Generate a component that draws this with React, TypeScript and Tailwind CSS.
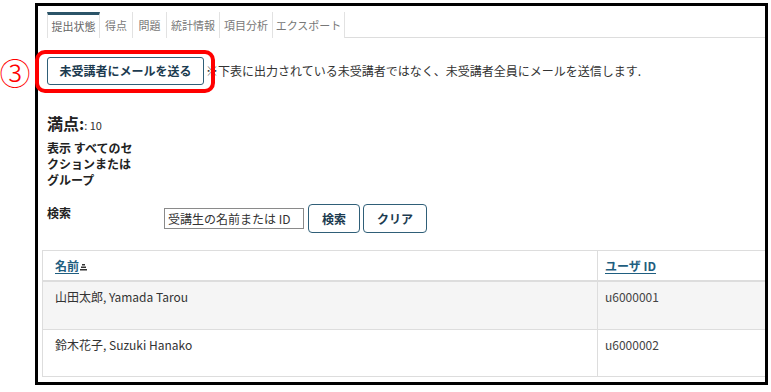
import React from 'react';

const tabs = [
  { label: '提出状態', w: 'w-[53px]', active: true },
  { label: '得点', w: 'w-[33px]', active: false },
  { label: '問題', w: 'w-[34px]', active: false },
  { label: '統計情報', w: 'w-[53px]', active: false },
  { label: '項目分析', w: 'w-[53px]', active: false },
  { label: 'エクスポート', w: 'w-[72px]', active: false },
];

const rows = [
  { name: '山田太郎, Yamada Tarou', id: 'u6000001', bg: 'bg-[#f5f5f5]' },
  { name: '鈴木花子, Suzuki Hanako', id: 'u6000002', bg: 'bg-white' },
];

export default function App() {
  return (
    <div className="relative w-[771px] h-[392px] bg-white overflow-hidden font-['Noto_Sans_CJK_JP','Noto_Sans',sans-serif] text-[#333]">
      <div className="ml-[35px] mt-[3px] w-[733px] h-[382px] border-[3px] border-black overflow-hidden">
        {/* tabs */}
        <div className="ml-[9px] mt-[6px] flex border-b border-[#ddd] h-[26px]">
          {tabs.map((t) => (
            <div
              key={t.label}
              className={
                t.active
                  ? `${t.w} h-[26px] flex items-center justify-center border-t-[3px] border-t-[#2b5468] border-x border-x-[#e2e2e2] text-[11px] leading-none text-[#666] bg-white`
                  : `${t.w} h-[26px] flex items-center justify-center border-r border-[#e2e2e2] text-[11px] leading-none text-[#777] bg-white`
              }
            >
              {t.label}
            </div>
          ))}
        </div>

        {/* send mail */}
        <div className="ml-[9px] mt-[19px] flex items-center gap-[2px]">
          <button className="w-[157px] h-[28px] rounded-[3px] border border-[#2f5f78] text-[12px] leading-none font-semibold text-[#1c3b50] bg-white">
            未受講者にメールを送る
          </button>
          <span className="text-[12px] leading-none text-[#333]">
            ※下表に出力されている未受講者ではなく、未受講者全員にメールを送信します.
          </span>
        </div>

        {/* max score */}
        <div className="ml-[9px] mt-[28px] h-[20px] flex items-baseline">
          <span className="text-[16px] leading-[20px] font-bold text-[#222]">満点:</span>
          <span className="text-[11px] leading-[20px] text-[#333]">: 10</span>
        </div>

        {/* display filter */}
        <div className="ml-[9px] mt-[7px] w-[90px] text-[12px] leading-[16px] font-semibold text-[#222]">
          表示 すべてのセクションまたはグループ
        </div>

        {/* search */}
        <div className="ml-[9px] mt-[16px] flex items-start">
          <div className="w-[117px] pt-[1px] text-[12px] leading-[16px] font-semibold text-[#222]">検索</div>
          <div className="flex items-center gap-[3px]">
            <div className="w-[140px] h-[21px] border border-[#8a8a8a] px-[3px] flex items-center text-[12px] leading-none text-[#333]">
              受講生の名前または ID
            </div>
            <button className="ml-[1px] w-[52px] h-[29px] rounded-[4px] border border-[#2f5f78] text-[12px] leading-none font-semibold text-[#1c3b50] bg-white">
              検索
            </button>
            <button className="w-[64px] h-[29px] rounded-[4px] border border-[#2f5f78] text-[12px] leading-none font-semibold text-[#1c3b50] bg-white">
              クリア
            </button>
          </div>
        </div>

        {/* table */}
        <div className="ml-[4px] mt-[17px] w-[760px] border-t border-l border-[#ddd]">
          <div className="flex h-[31px] border-b-2 border-[#ddd]">
            <div className="w-[555px] border-r border-[#ddd] pl-[12px] flex items-center">
              <span className="text-[12px] leading-none font-semibold text-[#1f5e80] underline underline-offset-2">名前</span>
              <svg width="7" height="7" viewBox="0 0 7 7" className="ml-[1px] mt-[3px]">
                <rect x="2" y="0" width="3" height="1.5" fill="#333" />
                <rect x="1" y="2.5" width="5" height="1.5" fill="#333" />
                <rect x="0" y="5" width="7" height="1.5" fill="#333" />
              </svg>
            </div>
            <div className="flex-1 pl-[7px] flex items-center">
              <span className="text-[12px] leading-none font-semibold text-[#1f5e80] underline underline-offset-2">ユーザ ID</span>
            </div>
          </div>
          {rows.map((r, i) => (
            <div key={r.id} className={`flex h-[47px] ${r.bg} ${i > 0 ? 'border-t border-[#ddd]' : ''}`}>
              <div className="w-[555px] border-r border-[#ddd] pl-[12px] pt-[7px] text-[12px] leading-[16px] text-[#333]">
                {r.name}
              </div>
              <div className="flex-1 pl-[7px] pt-[7px] text-[12px] leading-[16px] text-[#444]">{r.id}</div>
            </div>
          ))}
          <div className="border-t border-[#ddd]" />
        </div>
      </div>

      {/* annotation overlay */}
      <div className="absolute left-[35px] top-[50px] w-[180px] h-[43px] rounded-[10px] border-4 border-[#ff0000] pointer-events-none" />
      <div className="absolute left-[0px] top-[54px] w-[30px] h-[34px] flex items-center justify-center text-[31px] leading-none font-light text-[#ff0000] font-['Noto_Sans_CJK_JP',serif]">
        ③
      </div>
    </div>
  );
}
